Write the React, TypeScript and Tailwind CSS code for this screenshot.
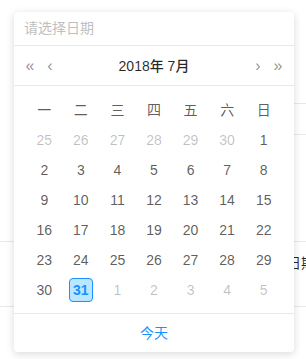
import React from 'react';

const font = { fontFamily: '"Liberation Sans", "Noto Sans CJK SC", sans-serif' };

const weekDays = ['一', '二', '三', '四', '五', '六', '日'];

// July 2018, weeks start on Monday
const days: { d: number; muted?: boolean; selected?: boolean }[] = [
  ...[25, 26, 27, 28, 29, 30].map((d) => ({ d, muted: true })),
  ...Array.from({ length: 31 }, (_, i) => ({ d: i + 1, selected: i + 1 === 31 })),
  ...[1, 2, 3, 4, 5].map((d) => ({ d, muted: true })),
];

export default function App() {
  return (
    <div className="relative w-[306px] h-[359px] overflow-hidden bg-white text-sm" style={font}>
      {/* page behind the popup */}
      <div className="h-[103px]" />
      <div className="ml-[294px] h-[31px] border-t border-[#e8e8e8]" />
      <div className="ml-[294px] h-[107px] border-t border-[#e8e8e8]" />
      <div className="h-[65px] border-t border-[#e8e8e8] pl-[287px] pt-[11px] whitespace-nowrap text-[rgba(0,0,0,0.85)]">
        日期
      </div>
      <div className="border-t border-[#e8e8e8]" />

      {/* calendar popup */}
      <div className="absolute left-[14px] top-[12px] w-[280px] rounded bg-white shadow-[0_2px_8px_rgba(0,0,0,0.15)]">
        <div className="h-[34px] px-[10px] py-[6px] border-b border-[#e8e8e8] leading-[21px] text-[#bfbfbf]">
          请选择日期
        </div>

        <div className="flex h-[40px] items-center border-b border-[#e8e8e8] text-[rgba(0,0,0,0.45)]">
          <div className="flex w-[60px] pl-[7px] gap-[4px] text-base" style={{ fontFamily: 'Arial, "Liberation Sans", sans-serif' }}>
            <span className="w-[18px] text-center">«</span>
            <span className="w-[14px] text-center">‹</span>
          </div>
          <div className="flex-1 text-center font-medium text-[rgba(0,0,0,0.85)]">2018年 7月</div>
          <div className="flex w-[60px] pr-[7px] gap-[4px] justify-end text-base" style={{ fontFamily: 'Arial, "Liberation Sans", sans-serif' }}>
            <span className="w-[14px] text-center">›</span>
            <span className="w-[18px] text-center">»</span>
          </div>
        </div>

        <div className="px-3 pt-[9px] pb-2">
          <div className="grid grid-cols-7">
            {weekDays.map((w) => (
              <div key={w} className="py-[6px] leading-[18px] text-center text-[rgba(0,0,0,0.65)]">
                {w}
              </div>
            ))}
          </div>
          <div className="grid grid-cols-7">
            {days.map((x, i) => (
              <div key={i} className="h-[30px] py-[3px] flex justify-center">
                <div
                  className={
                    x.selected
                      ? 'w-[24px] h-[24px] leading-[22px] text-center rounded-sm border border-[#1890ff] bg-[#bae7ff] text-[#1890ff] font-bold'
                      : x.muted
                      ? 'w-[24px] h-[24px] leading-[22px] text-center border border-transparent text-[rgba(0,0,0,0.25)]'
                      : 'w-[24px] h-[24px] leading-[22px] text-center border border-transparent text-[rgba(0,0,0,0.65)]'
                  }
                >
                  {x.d}
                </div>
              </div>
            ))}
          </div>
        </div>

        <div className="border-t border-[#e8e8e8] px-3 leading-[38px] text-center text-[#1890ff]">今天</div>
      </div>
    </div>
  );
}
